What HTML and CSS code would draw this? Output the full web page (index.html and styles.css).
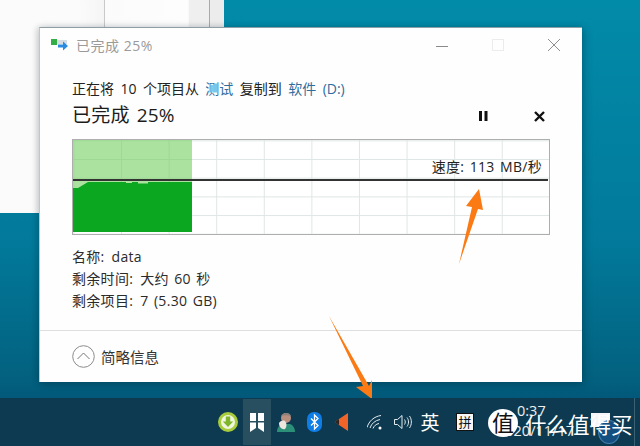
FILE: index.html
```html
<!DOCTYPE html>
<html lang="zh">
<head>
<meta charset="utf-8">
<title>已完成 25%</title>
<link rel="stylesheet" href="styles.css">
</head>
<body>
<div class="desktop">
  <div class="bg-window bg-a"></div>
  <div class="bg-window bg-b"></div>
  <div class="bg-window bg-c"></div>

  <section class="dialog">
    <header class="titlebar">
      <svg class="app-icon" width="18" height="14" viewBox="0 0 18 14"><rect x="0" y="1" width="6" height="6" fill="#35ad46"/><rect x="6" y="2" width="10" height="4" fill="#d5dde2"/><path d="M7 6.500h5V3.500l5 4.500-5 4.500v-3H7z" fill="#2a8be0"/></svg>
      <span class="title-text">已完成 25%</span>
      <span class="win-controls">
        <svg width="14" height="14" viewBox="0 0 14 14"><path d="M1 8.500h12" stroke="#8a8a8a" stroke-width="1" fill="none"/></svg>
        <svg width="14" height="14" viewBox="0 0 14 14"><rect x="1.500" y="1.500" width="11" height="11" stroke="#ececec" fill="none"/></svg>
        <svg width="14" height="14" viewBox="0 0 14 14"><path d="M1 1l12 12M13 1L1 13" stroke="#8f8f8f" stroke-width="1" fill="none"/></svg>
      </span>
    </header>

    <div class="content">
      <p class="copy-line">正在将 10 个项目从 <a class="loc">测试</a> 复制到 <a class="loc">软件 (D:)</a></p>
      <div class="head-row">
        <h1 class="heading">已完成 25%</h1>
        <span class="op-buttons">
          <svg width="10" height="10" viewBox="0 0 10 10"><path d="M1 0h3v10H1zM6.500 0h3v10h-3z" fill="#111"/></svg>
          <svg width="11" height="11" viewBox="0 0 11 11"><path d="M1 1l9 9M10 1l-9 9" stroke="#111" stroke-width="2.400" fill="none"/></svg>
        </span>
      </div>

      <div class="chart">
        <div class="grid"></div>
        <div class="band-light"></div>
        <svg class="band-dark" width="119" height="51" viewBox="0 0 119 51"><path d="M0 7h5L15 1h38v1h6V1h6v1.500h10V1h44v50H0z" fill="#0ca721"/></svg>
        <div class="speed-line"></div>
        <span class="speed-label">速度: 113 MB/秒</span>
      </div>

      <dl class="details">
        <div class="detail-row"><dt>名称:</dt><dd>data</dd></div>
        <div class="detail-row"><dt>剩余时间:</dt><dd>大约 60 秒</dd></div>
        <div class="detail-row"><dt>剩余项目:</dt><dd>7 (5.30 GB)</dd></div>
      </dl>
    </div>

    <footer class="dialog-foot">
      <svg class="chevron" width="23" height="23" viewBox="0 0 23 23"><circle cx="11.500" cy="11.500" r="10.800" fill="none" stroke="#8b8b8b" stroke-width="1"/><path d="M5.500 14l6-6 6 6" fill="none" stroke="#777" stroke-width="1"/></svg>
      <span class="less">简略信息</span>
    </footer>
  </section>

  <svg class="arrow arrow-a" width="40" height="82" viewBox="0 0 40 82"><path d="M3 79L16 22 10 21 23 4 27 25 22 24z" fill="#fb7a14"/></svg>
  <svg class="arrow arrow-b" width="50" height="88" viewBox="0 0 50 88"><path d="M1 1L35 71 28 72 44 84 44 65 41 71z" fill="#fb7a14"/></svg>

  <footer class="taskbar">
    <span class="tray-item">
      <svg width="20" height="20" viewBox="0 0 20 20"><circle cx="10" cy="10" r="10" fill="#a8cc3c"/><circle cx="10" cy="10" r="7" fill="#f1f6df"/><path d="M7.800 4.500h4.400v5h3L10 15 4.800 9.500h3z" fill="#7fb52a"/></svg>
    </span>
    <span class="tray-item active">
      <svg width="14" height="19" viewBox="0 0 14 19"><path d="M0 0h6v8H0zM8 0h6v8H8zM0 9.500h6v5.500L0 19zM8 9.500h6V19l-6-4z" fill="#fff"/></svg>
    </span>
    <span class="tray-item">
      <svg width="20" height="20" viewBox="0 0 20 20"><path d="M1 20c0-4 2-7 5-8l8 0c3 1 5 4 5 8z" fill="#2c8f78"/><circle cx="10" cy="6" r="5" fill="#b98f80"/><path d="M3 11c1-2 4-3 6-2 2 2 2 6 0 8-3 1-6-2-6-6z" fill="#ece6df"/><path d="M5 4c2-4 9-4 10 0-3-1-7-1-10 0z" fill="#8a8078"/></svg>
    </span>
    <span class="tray-item">
      <svg width="15" height="20" viewBox="0 0 15 20"><rect width="15" height="20" rx="7" fill="#0f7de6"/><path d="M4 6.500l7 7-3.500 3.500V3L11 6.500l-7 7" fill="none" stroke="#fff" stroke-width="1.300"/></svg>
    </span>
    <span class="tray-item">
      <svg width="14" height="18" viewBox="0 0 14 18"><path d="M0 9l4-3L13 0v18L4 12z" fill="#f0642a"/><path d="M0 9l4-3v6z" fill="#2a2420"/></svg>
    </span>
    <span class="tray-item net">
      <svg width="16" height="16" viewBox="0 0 16 16" fill="none" stroke="#e4ecef" stroke-width="1"><path d="M0 13.500C2 7 7 2.500 14 1.500M3 14C4.500 9.500 8 6.500 13 5.500M6 14.500C7 12 9 10 12 9.500"/><circle cx="13" cy="14" r="1.500" fill="#fff" stroke="none"/></svg>
    </span>
    <span class="tray-item vol">
      <svg width="19" height="14" viewBox="0 0 19 14" fill="none" stroke="#e4ecef" stroke-width="1"><path d="M.5 4.500h3L8 .5v13l-4.500-4h-3zM10.500 4.500c1 1.500 1 3.500 0 5M13 2.500c2 2.500 2 6.500 0 9M15.500 1c2.500 3.500 2.500 8.500 0 12"/></svg>
    </span>
    <span class="ime">英</span>
    <span class="pinyin">拼</span>
    <span class="clock">
      <span class="clock-time">0:37</span>
      <span class="clock-date">2020/11/17</span>
    </span>
    <span class="badge-round">值</span>
    <span class="notify-box"></span>
    <span class="notify"></span>
    <span class="watermark">什么值得买</span>
    <span class="show-desktop"></span>
  </footer>
</div>
</body>
</html>
```

FILE: styles.css
```css
* { box-sizing: border-box; }
html, body { margin: 0; padding: 0; }
body { width: 640px; height: 446px; overflow: hidden; font-family: "Open Sans", "Noto Sans CJK SC", sans-serif; }
.desktop {
  position: relative;
  width: 640px;
  height: 446px;
  overflow: hidden;
  background: linear-gradient(180deg, #028ba9 0%, #02799a 55%, #03617f 85%, #02587a 89%);
  display: flex;
  flex-direction: column;
  justify-content: flex-end;
}
.bg-window { position: absolute; top: 0; }
.bg-a { left: 0; width: 105px; height: 213px; background: #fbfbfb; border-right: 1px solid #c9c9c9; box-shadow: inset -30px 0 30px -30px #eee; }
.bg-b { left: 105px; width: 105px; height: 30px; background: linear-gradient(90deg, #fbfbfb 0, #fdfdfd 80%, #efefef 81%, #efefef 100%); border-right: 1px solid #aaa; }
.bg-c { left: 210px; width: 14px; height: 30px; background: #ececec; }

.dialog {
  position: absolute;
  left: 39px;
  top: 27px;
  width: 543px;
  height: 355px;
  background: #fefefe;
  border-top: 1px solid #8f9ea4;
  border-left: 1px solid #b9c9ce;
  box-shadow: 2px 2px 8px rgba(0, 30, 50, .3), -3px 0 6px rgba(0, 0, 0, .1);
  display: flex;
  flex-direction: column;
}
.titlebar { height: 34px; flex: none; display: flex; align-items: center; padding: 0 21px 0 11px; color: #9a9a9a; font-size: 14px; }
.app-icon { margin-right: 7px; }
.title-text { letter-spacing: .5px; }
.win-controls { margin-left: auto; display: flex; gap: 42px; }

.content { flex: 1; padding: 18px 32px 0; color: #222; }
.copy-line { margin: 0; font-size: 14px; line-height: 18px; word-spacing: 2.800px; white-space: pre-wrap; }
.loc { color: #2f6d9f; }
.head-row { display: flex; align-items: center; height: 28px; margin-top: 2px; }
.heading { margin: 0; font-size: 19px; font-weight: 400; color: #1c1c1c; word-spacing: 2px; letter-spacing: .2px; }
.op-buttons { margin-left: auto; display: flex; gap: 46px; align-items: center; padding: 4px 5px 0 0; }

.chart {
  position: relative;
  margin-top: 11px;
  width: 478px;
  height: 96px;
  border: 1px solid #aeaeae;
  background-color: #fff;
  overflow: hidden;
}
.grid {
  position: absolute;
  inset: 0;
  background-image:
    linear-gradient(90deg, #dfe6e6 1px, transparent 1px),
    linear-gradient(180deg, #dfe6e6 1px, transparent 1px);
  background-size: 47.600px 18.700px;
  background-position: 48px 19px;
}
.band-light { position: absolute; left: 0; top: 0; width: 119px; height: 92px; background: rgba(110, 205, 90, .58); }
.band-dark { position: absolute; left: 0; top: 41px; }
.speed-line { position: absolute; left: 0; right: 1px; top: 39px; height: 2px; background: #333; }
.speed-label { position: absolute; right: 7px; top: 18px; font-size: 14px; line-height: 18px; color: #222; word-spacing: 1.500px; letter-spacing: .3px; }

.details { margin: 11px 0 0; font-size: 14px; line-height: 22px; color: #2b2b2b; word-spacing: 1.500px; letter-spacing: .3px; }
.detail-row { display: flex; gap: 7px; }
.detail-row dt, .detail-row dd { margin: 0; }

.dialog-foot { height: 52px; flex: none; border-top: 1px solid #dfdfdf; display: flex; align-items: center; padding: 0 32px; gap: 6px; font-size: 14.500px; color: #333; }

.arrow { position: absolute; }
.arrow-a { left: 456px; top: 185px; }
.arrow-b { left: 328px; top: 315px; }

.taskbar {
  position: relative;
  height: 48px;
  flex: none;
  background: #0d3a50;
  display: flex;
  align-items: center;
  padding-left: 214px;
  color: #fff;
}
.tray-item { width: 28px; height: 46px; display: flex; align-items: center; justify-content: center; flex: none; }
.tray-item.active { background: #274f60; margin: 0 1px; }
.tray-item.net { margin-left: 5px; }
.ime { margin-left: -2px; width: 30px; text-align: center; font-size: 19px; }
.pinyin { margin-left: 11px; width: 18px; height: 18px; background: #f6f6f6; border: 1px solid #111; color: #111; font-size: 13px; line-height: 16px; text-align: center; }
.clock { position: absolute; left: 497px; top: 3px; display: flex; flex-direction: column; font-size: 14.500px; line-height: 20px; color: #eee; }
.clock-time { padding-left: 20px; }
.badge-round { position: absolute; left: 488px; top: 11px; width: 30px; height: 28px; border-radius: 50%; background: #fff; color: #111; text-align: center; font-size: 22px; line-height: 27px; }
.notify-box { position: absolute; left: 591px; top: 15px; width: 19px; height: 14px; background: #f4f6f8; }
.notify { position: absolute; left: 598px; top: 22px; width: 22px; height: 24px; border-radius: 50%; background: #154f7f; border: 1px solid #3f7fb0; }
.watermark { position: absolute; left: 525px; top: 12px; font-size: 21.500px; line-height: 30px; color: #fff; white-space: nowrap; }
.show-desktop { position: absolute; left: 634px; top: 0; width: 1px; height: 48px; background: #3a6072; }
```
